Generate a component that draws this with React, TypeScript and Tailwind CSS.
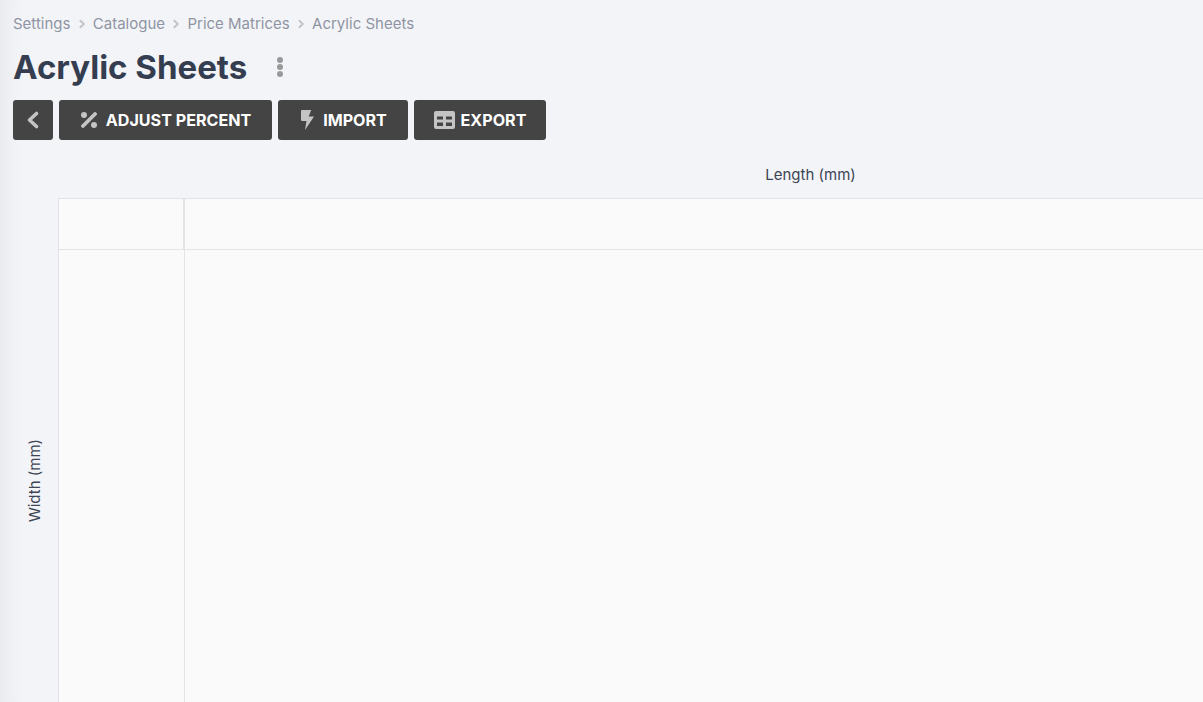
import React from "react";

const Chevron = () => (
  <svg width="10" height="10" viewBox="0 0 10 10" fill="none" stroke="#c2c4cc" strokeWidth="2" className="shrink-0">
    <path d="M2.8 1.2 6.8 5 2.8 8.8" />
  </svg>
);

const Btn = ({ icon, label, className }: { icon: React.ReactNode; label: string; className: string }) => (
  <button className={`flex h-10 items-center rounded-[3px] bg-[#444444] text-[16.1px] font-bold text-white ${className}`}>
    {icon}
    <span>{label}</span>
  </button>
);

export default function App() {
  const crumbs = ["Settings", "Catalogue", "Price Matrices", "Acrylic Sheets"];
  return (
    <div className="relative h-[702px] w-[1203px] overflow-hidden bg-[#f3f4f8] font-['Inter',sans-serif] shadow-[inset_22px_0_24px_-18px_rgba(0,0,0,0.06)]">
      <div className="px-[13px] pt-[15px]">
        <nav className="flex h-[18px] items-center text-[15px] leading-[18px] text-[#8f94a3]">
          {crumbs.map((c, i) => (
            <React.Fragment key={c}>
              {i > 0 && <span className="mx-[6.2px] flex"><Chevron /></span>}
              <span>{c}</span>
            </React.Fragment>
          ))}
        </nav>
        <div className="mt-[11px] flex h-[46px] items-center">
          <h1 className="text-[33px] font-bold leading-[46px] text-[#353d50]">Acrylic Sheets</h1>
          <svg width="8" height="20" viewBox="0 0 8 20" fill="#999999" className="ml-[29px]">
            <circle cx="4" cy="3" r="3" />
            <circle cx="4" cy="10" r="3" />
            <circle cx="4" cy="17" r="3" />
          </svg>
        </div>
        <div className="mt-[10px] flex gap-[6px]">
          <Btn
            className="w-10 justify-center"
            label=""
            icon={
              <svg width="14" height="18" viewBox="0 0 14 18" fill="none" stroke="#c4c4c4" strokeWidth="3.6" strokeLinecap="round" strokeLinejoin="round">
                <path d="M10.5 2.5 3.5 9l7 6.5" />
              </svg>
            }
          />
          <Btn
            className="w-[213px] justify-center gap-[9px] pl-[1px]"
            label="ADJUST PERCENT"
            icon={
              <svg width="16" height="16" viewBox="0 0 16 16" fill="#c4c4c4">
                <circle cx="3" cy="3" r="3" />
                <circle cx="13" cy="13" r="3" />
                <path d="M14 2 2 14" stroke="#c4c4c4" strokeWidth="3.8" strokeLinecap="round" />
              </svg>
            }
          />
          <Btn
            className="w-[130px] justify-center gap-[9px] pl-[2px]"
            label="IMPORT"
            icon={
              <svg width="13" height="20" viewBox="0 0 13 20" fill="#c4c4c4">
                <path d="M1 0H10.2L7.7 6.5H13L4 20 5.5 11H1a1 1 0 0 1-1-1V1a1 1 0 0 1 1-1Z" />
              </svg>
            }
          />
          <Btn
            className="w-[132px] justify-center gap-[6px]"
            label="EXPORT"
            icon={
              <svg width="21" height="18" viewBox="0 0 21 18" fill="#c4c4c4">
                <path fillRule="evenodd" d="M2 0h17a2 2 0 0 1 2 2v14a2 2 0 0 1-2 2H2a2 2 0 0 1-2-2V2a2 2 0 0 1 2-2Zm1 5.5v3h6v-3Zm9 0v3h6v-3ZM3 11.5V15h6v-3.5Zm9 0V15h6v-3.5Z" />
              </svg>
            }
          />
        </div>
      </div>
      <div className="flex">
        <div className="flex w-[58px] shrink-0 items-center justify-center pl-[11px] pt-[60px]">
          <span className="rotate-180 text-[15px] leading-[18px] text-[#3d4454] [writing-mode:vertical-rl]">Width (mm)</span>
        </div>
        <div className="w-[1504px] shrink-0">
          <div className="flex h-[58px] items-center justify-center pl-[1px] pt-[12px] text-[15px] text-[#3d4454]">Length (mm)</div>
          <div className="grid h-[564px] grid-cols-[126px_1fr] grid-rows-[51px_1fr] border-l border-t border-[#e2e2e4] bg-[#fafafa]">
            <div className="border-b border-r-2 border-[#e4e4e6]" />
            <div className="border-b border-[#e4e4e6]" />
            <div className="border-r border-[#e4e4e6]" />
            <div />
          </div>
        </div>
      </div>
    </div>
  );
}
